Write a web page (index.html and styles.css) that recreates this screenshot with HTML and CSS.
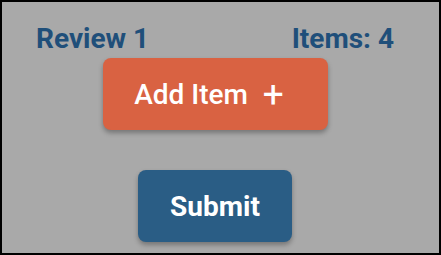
FILE: index.html
```html
<!DOCTYPE html>
<html>
<head>
<meta charset="utf-8">
<link rel="stylesheet" href="styles.css">
</head>
<body>
<div class="frame">
  <div class="content">
    <div class="header">
      <span class="title">Review 1</span>
      <span class="count">Items: 4</span>
    </div>
    <button class="btn add">Add Item<span class="plus">+</span></button>
    <button class="btn submit">Submit</button>
  </div>
</div>
</body>
</html>
```
FILE: styles.css
```css
html, body {
  margin: 0;
  padding: 0;
}
body {
  width: 441px;
  height: 255px;
  font-family: Roboto, "Liberation Sans", sans-serif;
}
.frame {
  box-sizing: border-box;
  width: 441px;
  height: 255px;
  border: 2px solid #000;
  background: #a9a9a9;
}
.content {
  display: flex;
  flex-direction: column;
  align-items: center;
  padding: 0 45px 0 34px;
}
.header {
  align-self: stretch;
  display: flex;
  justify-content: space-between;
  color: #1f4f7a;
  font-weight: 700;
  font-size: 28px;
  line-height: 32px;
  margin-top: 21px;
}
.btn {
  border: none;
  border-radius: 8px;
  color: #fff;
  font-family: Roboto, "Liberation Sans", sans-serif;
  font-size: 28px;
  height: 72px;
  box-shadow: 0 3px 5px rgba(0,0,0,0.3);
  display: flex;
  align-items: center;
  justify-content: center;
  padding: 0;
}
.add {
  margin-top: 3px;
  width: 225px;
  padding-right: 12px;
  background: #d96242;
  font-weight: 500;
}
.plus {
  font-weight: 400;
  font-size: 37px;
  margin-left: 15px;
}
.submit {
  margin-top: 40px;
  width: 154px;
  background: #2a5d85;
  font-weight: 700;
}
```
